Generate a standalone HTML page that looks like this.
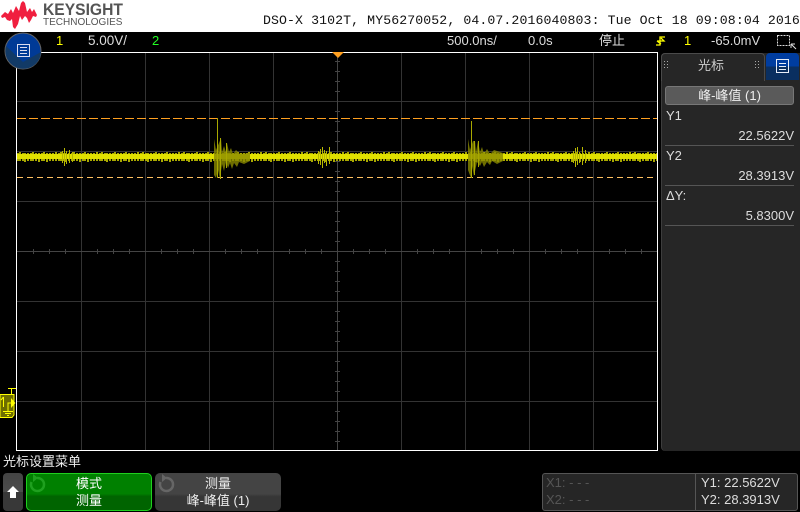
<!DOCTYPE html>
<html><head><meta charset="utf-8"><style>
html,body{margin:0;padding:0;background:#000}
#p{position:relative;width:800px;height:512px;overflow:hidden;background:#000;font-family:"Liberation Sans","Noto Sans CJK SC",sans-serif;color:#ddd}
#p div,#p span{position:absolute;white-space:nowrap}
.t{font-size:13px;line-height:14px}
.r{text-align:right}
.c{text-align:center}
</style></head><body><div id="p">
<div style="left:0;top:0;width:800px;height:32px;background:#fff"></div>
<svg style="position:absolute;left:0;top:0" width="42" height="32"><path d="M1 16L5 12L8 14L11 9L13 13L16 6L19 11L21 3L23 1L25 3L27 12L30 8L32 12L34 9L37 15L36 17L33 16L31 20L29 23L27 18L25 16L22 20L20 16L18 24L15 29L13 27L12 19L10 21L7 20L5 17L2 18Z" fill="#f01f3f"/></svg>
<span style="left:43px;top:0;font-size:17px;line-height:20px;font-weight:bold;color:#555;transform:scaleX(.92);transform-origin:0 0">KEYSIGHT</span>
<span style="left:43px;top:17px;font-size:10px;line-height:12px;color:#555;letter-spacing:0">TECHNOLOGIES</span>
<span style="left:263px;top:13px;font-family:'Liberation Mono',monospace;font-size:13.2px;line-height:16px;color:#111;letter-spacing:.1px">DSO-X 3102T, MY56270052, 04.07.2016040803: Tue Oct 18 09:08:04 2016</span>

<span class="t" style="left:56px;top:34px;color:#ff0">1</span>
<span class="t" style="left:88px;top:34px;font-size:13.500px">5.00V/</span>
<span class="t" style="left:152px;top:34px;color:#2f2">2</span>
<span class="t" style="left:447px;top:34px">500.0ns/</span>
<span class="t" style="left:528px;top:34px">0.0s</span>
<span class="t" style="left:599px;top:34px">停止</span>
<span class="t" style="left:684px;top:34px;color:#ff0">1</span>
<span class="t" style="left:711px;top:34px">-65.0mV</span>
<svg style="position:absolute;left:655px;top:35px" width="12" height="12"><path d="M1 10 H5 V2 H10 M2 6 H9 L6 3 M2 6 L6 9" fill="none" stroke="#ff0" stroke-width="1.300"/></svg>
<svg style="position:absolute;left:776px;top:33px" width="22" height="17"><rect x="1.500" y="2.500" width="12" height="10" fill="none" stroke="#ddd" stroke-dasharray="2 1"/><path d="M15 11 L20 16 M15 11 V15 M15 11 H19" stroke="#ddd" fill="none"/></svg>

<svg style="position:absolute;left:0;top:0" width="800" height="512">
<rect x="16.500" y="52.500" width="641" height="398" fill="#000" stroke="#fff"/>
<g stroke="#333" fill="none">
<path d="M81.500 53V450M145.500 53V450M209.500 53V450M273.500 53V450M401.500 53V450M465.500 53V450M529.500 53V450M593.500 53V450"/>
<path d="M17 101.500H657M17 151.500H657M17 201.500H657M17 301.500H657M17 351.500H657M17 401.500H657"/>
<path stroke="#444" d="M337.500 53V450M17 251.500H657"/>
<path stroke="#444" d="M33.500 249V254M49.500 249V254M65.500 249V254M97.500 249V254M113.500 249V254M129.500 249V254M161.500 249V254M177.500 249V254M193.500 249V254M225.500 249V254M241.500 249V254M257.500 249V254M289.500 249V254M305.500 249V254M321.500 249V254M353.500 249V254M369.500 249V254M385.500 249V254M417.500 249V254M433.500 249V254M449.500 249V254M481.500 249V254M497.500 249V254M513.500 249V254M545.500 249V254M561.500 249V254M577.500 249V254M609.500 249V254M625.500 249V254M641.500 249V254"/>
<path stroke="#444" d="M335 61.500H340M335 71.500H340M335 81.500H340M335 91.500H340M335 111.500H340M335 121.500H340M335 131.500H340M335 141.500H340M335 161.500H340M335 171.500H340M335 181.500H340M335 191.500H340M335 211.500H340M335 221.500H340M335 231.500H340M335 241.500H340M335 261.500H340M335 271.500H340M335 281.500H340M335 291.500H340M335 311.500H340M335 321.500H340M335 331.500H340M335 341.500H340M335 361.500H340M335 371.500H340M335 381.500H340M335 391.500H340M335 411.500H340M335 421.500H340M335 431.500H340M335 441.500H340"/>
</g>
<path d="M17 118.500H657" stroke="#ffa020" stroke-dasharray="9 3"/>
<path d="M17 177.500H657" stroke="#ffc060" stroke-dasharray="6 4"/>
<path d="M332 52H344L338 58Z" fill="#ffa020"/>
<defs><pattern id="n" width="41" height="12" patternUnits="userSpaceOnUse" x="17" y="151">
<path d="M1 2V10M3 1V10M6 2V10M8 2V11M11 2V10M14 2V10M16 1V10M19 2V10M22 2V11M25 2V10M27 1V10M30 2V11M33 2V10M36 2V10M39 1V10" stroke="#a8a800" stroke-width="2" fill="none"/>
</pattern></defs>
<rect x="17" y="151" width="640" height="12" fill="url(#n)"/>
<rect x="17" y="154" width="640" height="5" fill="#e0e000"/>
<path d="M214 139L216 150L219 143L221 138L222 152L224 146L226 152L227 143L229 152L231 148L233 154L236 150L240 154L250 153L250 161L244 164L239 162L237 167L234 163L232 169L230 163L228 168L226 162L224 171L222 164L220 179L218 170L216 178L214 175Z" fill="#8a8a00" opacity=".8"/>
<path d="M468 139L470 150L473 141L475 141L476 152L478 141L480 152L482 147L484 154L487 149L490 154L494 150L503 153L503 161L497 164L492 161L490 165L487 162L484 167L482 162L480 166L477 162L474 176L472 166L471 178L468 170Z" fill="#8a8a00" opacity=".8"/>
<g fill="none" stroke="#a8a800" stroke-width="1">
<path d="M217.500 118V178M220.500 138V179M226.500 143V168"/>
<path d="M471.500 121V178M474.500 141V175M478.500 141V167"/>
<path stroke="#b8b800" d="M318.500 151V164M320.500 149V165M322.500 147V168M324.500 150V163M326.500 151V166M329.500 147V164"/>
<path stroke="#b8b800" d="M62.500 151V163M64.500 148V166M66.500 151V164M69.500 150V163M72.500 152V162"/>
<path stroke="#b8b800" d="M573.500 151V163M575.500 148V167M577.500 147V165M579.500 152V163M582.500 147V165M585.500 150V163"/>
</g>
<path d="M0 394.500H14V415L12 417.500H0Z" fill="#6d6d00" stroke="#ff0"/>
<path d="M8 388.500H16M11.500 389V394" stroke="#ff0" fill="none"/>
<path d="M3.500 397V407M1 400L3.500 397M11 403H8V411M3 411.500H13M5 413.500H11M7 415.500H9" stroke="#ff0" fill="none"/>
<path d="M11 398L15.500 403L11 408Z" fill="#ff0"/>
<circle cx="23" cy="51" r="18" fill="#003a96" stroke="#666"/>
<path d="M6 46 L23 62 L41 52 A18 18 0 0 1 33 66 A18 18 0 0 1 6 46" fill="#123a66"/>
<g fill="none" stroke="#dde"><rect x="17.500" y="44.500" width="12" height="12"/><path d="M20 47.500H27M20 50.500H27M20 53.500H27"/></g>
</svg>

<div style="left:661px;top:53px;width:139px;height:398px;background:#262626;border-radius:4px 0 0 4px;border-left:1px solid #3d3d3d"></div>
<div style="left:661px;top:53px;width:104px;height:28px;background:#262626;border:1px solid #4a4a4a;border-bottom:0;border-radius:4px 4px 0 0;box-sizing:border-box"></div>
<span class="c" style="left:661px;top:58px;width:100px;font-size:13px;line-height:16px;color:#ccc">光标</span>
<svg style="position:absolute;left:664px;top:61px" width="130" height="10" fill="#aaa"><path d="M0 0h1v1H0zM3 0h1v1H3zM0 3h1v1H0zM3 3h1v1H3zM0 6h1v1H0zM3 6h1v1H3zM91 0h1v1h-1zM94 0h1v1h-1zM91 3h1v1h-1zM94 3h1v1h-1zM91 6h1v1h-1zM94 6h1v1h-1z"/></svg>
<div style="left:766px;top:53px;width:33px;height:27px;background:linear-gradient(#003da0 0,#003da0 50%,#0a2f60 50%);border-radius:4px 4px 0 0"></div>
<svg style="position:absolute;left:775px;top:58px" width="16" height="16" fill="none" stroke="#e8eef8"><rect x="1.500" y="1.500" width="12" height="13"/><path d="M4 5.500H11M4 8.500H11M4 11.500H11"/></svg>
<div style="left:665px;top:86px;width:129px;height:19px;background:#5a5a5a;border-radius:3px;border:1px solid #777;box-sizing:border-box"></div>
<span class="c" style="left:665px;top:88px;width:129px;font-size:13px;line-height:15px;color:#eee">峰-峰值 (1)</span>

<span class="t" style="left:666px;top:109px">Y1</span>
<span class="t r" style="right:6px;top:129px">22.5622V</span>
<div style="left:665px;top:145px;width:129px;height:1px;background:#555"></div>
<span class="t" style="left:666px;top:149px">Y2</span>
<span class="t r" style="right:6px;top:169px">28.3913V</span>
<div style="left:665px;top:185px;width:129px;height:1px;background:#555"></div>
<span class="t" style="left:666px;top:189px">ΔY:</span>
<span class="t r" style="right:6px;top:209px">5.8300V</span>
<div style="left:665px;top:225px;width:129px;height:1px;background:#555"></div>

<span style="left:3px;top:454px;font-size:13px;line-height:15px;color:#eee">光标设置菜单</span>

<div style="left:3px;top:473px;width:20px;height:38px;background:linear-gradient(#444 0,#4c4c4c 50%,#383838 50%);border-radius:4px"></div>
<svg style="position:absolute;left:6px;top:485px" width="14" height="14"><path d="M7 1L13 7H10V13H4V7H1Z" fill="#fff"/></svg>

<div style="left:26px;top:473px;width:126px;height:38px;box-sizing:border-box;border:1px solid #1fd01f;border-radius:5px;background:linear-gradient(#008000 0,#008000 55%,#006400 62%)"></div>
<svg style="position:absolute;left:28px;top:474px" width="20" height="20" fill="none"><path d="M9 4A6.500 6.500 0 1 1 3.500 8" stroke="#1fa01f" stroke-width="2.500"/><path d="M5 0L10 4L5 8Z" fill="#1fa01f"/></svg>
<span class="c" style="left:26px;top:475px;width:126px;font-size:13px;line-height:17px;color:#fff">模式<br>测量</span>
<div style="left:155px;top:473px;width:126px;height:38px;border-radius:5px;background:linear-gradient(#444 0,#444 55%,#363636 62%)"></div>
<svg style="position:absolute;left:157px;top:474px" width="20" height="20" fill="none"><path d="M9 4A6.500 6.500 0 1 1 3.500 8" stroke="#666" stroke-width="2.500"/><path d="M5 0L10 4L5 8Z" fill="#666"/></svg>
<span class="c" style="left:155px;top:475px;width:126px;font-size:13px;line-height:17px;color:#eee">测量<br>峰-峰值 (1)</span>

<div style="left:542px;top:473px;width:256px;height:38px;box-sizing:border-box;border:1px solid #555;border-radius:3px;background:#262626"></div>
<div style="left:695px;top:474px;width:1px;height:36px;background:#555"></div>
<span class="t" style="left:546px;top:476px;color:#555">X1: - - -</span>
<span class="t" style="left:546px;top:493px;color:#555">X2: - - -</span>
<span class="t" style="left:701px;top:476px">Y1: 22.5622V</span>
<span class="t" style="left:701px;top:493px">Y2: 28.3913V</span>
</div></body></html>
